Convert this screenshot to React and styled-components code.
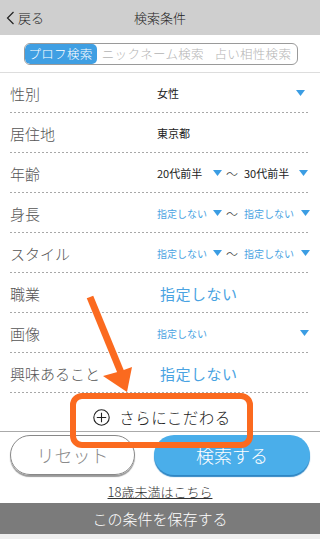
import React from 'react'
import styled, { createGlobalStyle } from 'styled-components'

const GlobalStyle = createGlobalStyle`
  html, body {
    margin: 0;
    padding: 0;
    background: #ffffff;
  }
  body {
    font-family: "Noto Sans CJK JP", "Noto Sans", sans-serif;
  }
`

const rows = [
  { label: '性別', kind: 'single', value: '女性' },
  { label: '居住地', kind: 'plain', value: '東京都' },
  { label: '年齢', kind: 'range', from: '20代前半', to: '30代前半' },
  { label: '身長', kind: 'rangeSmall', from: '指定しない', to: '指定しない' },
  { label: 'スタイル', kind: 'rangeSmall', from: '指定しない', to: '指定しない' },
  { label: '職業', kind: 'link', value: '指定しない' },
  { label: '画像', kind: 'singleSmall', value: '指定しない' },
  { label: '興味あること', kind: 'link', value: '指定しない' },
]

function Arrow() {
  return (
    <svg width="9" height="6" viewBox="0 0 9 6">
      <path d="M0 0 L9 0 L4.5 6 Z" fill="#3b9de3" />
    </svg>
  )
}

function RowValue({ row }) {
  if (row.kind === 'single') {
    return (
      <Select $width="148px">
        <ValueText>{row.value}</ValueText>
        <Arrow />
      </Select>
    )
  }
  if (row.kind === 'singleSmall') {
    return (
      <Select $width="152px">
        <SmallBlue>{row.value}</SmallBlue>
        <Arrow />
      </Select>
    )
  }
  if (row.kind === 'plain') {
    return <ValueText>{row.value}</ValueText>
  }
  if (row.kind === 'link') {
    return <LinkValue>{row.value}</LinkValue>
  }
  const Text = row.kind === 'range' ? ValueText : SmallBlue
  return (
    <Range>
      <Select $width="65px">
        <Text>{row.from}</Text>
        <Arrow />
      </Select>
      <Tilde>〜</Tilde>
      <Select $width={row.kind === 'range' ? '64px' : '66px'}>
        <Text>{row.to}</Text>
        <Arrow />
      </Select>
    </Range>
  )
}

export default function App() {
  return (
    <Screen>
      <GlobalStyle />
      <Header>
        <Back>
          <svg width="9" height="14" viewBox="0 0 9 14">
            <path d="M7.5 1 L1.5 7 L7.5 13" fill="none" stroke="#222" strokeWidth="1.2" />
          </svg>
          <span>戻る</span>
        </Back>
        <HeaderTitle>検索条件</HeaderTitle>
      </Header>
      <TabBar>
        <Segment>
          <Tab $active>プロフ検索</Tab>
          <Tab>ニックネーム検索</Tab>
          <Tab>占い相性検索</Tab>
        </Segment>
      </TabBar>
      <List>
        {rows.map((row) => (
          <Row key={row.label}>
            <Label>{row.label}</Label>
            <RowValue row={row} />
          </Row>
        ))}
      </List>
      <MoreRow>
        <PlusIcon>
          <svg width="17" height="17" viewBox="0 0 17 17">
            <circle cx="8.5" cy="8.5" r="7.7" fill="none" stroke="#222" strokeWidth="1.1" />
            <path d="M8.5 3.8 V13.2 M3.8 8.5 H13.2" stroke="#222" strokeWidth="1.1" />
          </svg>
        </PlusIcon>
        <MoreText>さらにこだわる</MoreText>
      </MoreRow>
      <Actions>
        <ResetButton>リセット</ResetButton>
        <SearchButton>検索する</SearchButton>
      </Actions>
      <Minor>18歳未満はこちら</Minor>
      <SaveBar>この条件を保存する</SaveBar>
      <Footer />

      <Highlight />
      <Pointer width="60" height="105" viewBox="0 0 60 105">
        <path d="M6 2 L38 80" stroke="#fb6a1f" strokeWidth="7" strokeLinecap="butt" />
        <path d="M43 97 L19 81 L37 76 L48 72 Z" fill="#fb6a1f" />
      </Pointer>
    </Screen>
  )
}

const Screen = styled.div`
  position: relative;
  width: 320px;
  height: 539px;
  overflow: hidden;
  display: flex;
  flex-direction: column;
  background: #ffffff;
`
// ヘッダー
const Header = styled.div`
  height: 35px;
  display: flex;
  align-items: center;
  justify-content: center;
  position: relative;
  background: #cfcfcf;
  flex-shrink: 0;
`

const Back = styled.div`
  position: absolute;
  left: 6px;
  top: 0;
  height: 35px;
  display: flex;
  align-items: center;
  gap: 3px;
  font-size: 13px;
  font-weight: 300;
  color: #222;
`

const HeaderTitle = styled.div`
  font-size: 13px;
  font-weight: 300;
  color: #222;
`
// タブ
const TabBar = styled.div`
  height: 38px;
  display: flex;
  align-items: center;
  justify-content: center;
  border-bottom: 1px solid #dddddd;
  flex-shrink: 0;
  box-sizing: border-box;
`

const Segment = styled.div`
  width: 274px;
  height: 22px;
  display: flex;
  margin-left: 1px;
  border: 1px solid #9a9a9a;
  border-radius: 6px;
  overflow: hidden;
  box-sizing: border-box;
`

const Tab = styled.div`
  display: flex;
  align-items: center;
  justify-content: center;
  padding: 0 ${(p) => (p.$active ? '4px' : '3px')};
  font-size: 12.5px;
  font-weight: 300;
  letter-spacing: 0.3px;
  white-space: nowrap;
  color: ${(p) => (p.$active ? '#ffffff' : '#b4b4b4')};
  background: ${(p) => (p.$active ? '#3f9fe3' : 'transparent')};
  border-radius: ${(p) => (p.$active ? '5px' : '0')};
  flex: ${(p) => (p.$active ? '0 0 72px' : '1 1 auto')};
  box-sizing: border-box;
`
// 条件リスト
const List = styled.div`
  display: flex;
  flex-direction: column;
`

const Row = styled.div`
  position: relative;
  height: 40px;
  display: flex;
  align-items: center;
  padding: 0 10px;
  box-sizing: border-box;

  &::after {
    content: '';
    position: absolute;
    left: 10px;
    right: 10px;
    bottom: 0;
    height: 1px;
    background-image: linear-gradient(to right, #a8a8a8 50%, transparent 50%);
    background-size: 4px 1px;
  }
`

const Label = styled.div`
  width: 147px;
  flex-shrink: 0;
  font-size: 15px;
  font-weight: 300;
  color: #555555;
`

const Select = styled.div`
  width: ${(p) => p.$width};
  display: flex;
  align-items: center;
  justify-content: space-between;
`

const Range = styled.div`
  display: flex;
  align-items: center;
`

const Tilde = styled.span`
  font-size: 12px;
  font-weight: 300;
  color: #333;
  margin: 0 6px 0 4px;
`

const ValueText = styled.span`
  font-size: 11px;
  color: #222;
`

const SmallBlue = styled.span`
  font-size: 10px;
  color: #4aa3e2;
`

const LinkValue = styled.span`
  font-size: 15px;
  color: #4aa3e2;
  margin-left: 3px;
  letter-spacing: 0.5px;
`
// さらにこだわる
const MoreRow = styled.div`
  height: 39px;
  display: flex;
  align-items: center;
  justify-content: center;
  padding-top: 10px;
  border-bottom: 1px solid #aaaaaa;
  box-sizing: border-box;
  flex-shrink: 0;
`

const PlusIcon = styled.span`
  display: flex;
  margin-right: 9px;
  margin-left: 4px;
`

const MoreText = styled.span`
  font-size: 15.5px;
  font-weight: 300;
  color: #222;
  letter-spacing: 0.5px;
`
// ボタン
const Actions = styled.div`
  display: flex;
  justify-content: space-between;
  padding: 3px 10px 0 10px;
`

const ResetButton = styled.div`
  width: 125px;
  height: 40px;
  display: flex;
  align-items: center;
  justify-content: center;
  border: 1px solid #888;
  border-radius: 20px;
  box-shadow: 0 2px 1px rgba(0, 0, 0, 0.4);
  font-size: 18px;
  font-weight: 300;
  color: #8a8a8a;
  box-sizing: border-box;
`

const SearchButton = styled.div`
  width: 156px;
  height: 40px;
  display: flex;
  align-items: center;
  justify-content: center;
  border-radius: 20px;
  background: #4aaeea;
  box-shadow: 0 2px 1px #2e86c4;
  font-size: 18px;
  font-weight: 300;
  color: #ffffff;
`

const Minor = styled.div`
  margin-top: 8px;
  text-align: center;
  font-size: 13px;
  font-weight: 300;
  color: #333;
  text-decoration: underline;
  line-height: 18px;
`

const SaveBar = styled.div`
  margin-top: 2px;
  height: 31px;
  display: flex;
  align-items: center;
  justify-content: center;
  background: #7b7b7b;
  font-size: 15px;
  font-weight: 300;
  color: #ffffff;
  flex-shrink: 0;
`

const Footer = styled.div`
  flex: 1;
  background: #efefef;
`
// 注釈
const Highlight = styled.div`
  position: absolute;
  left: 70px;
  top: 393px;
  width: 183px;
  height: 55px;
  border: 6px solid #fb6a1f;
  border-radius: 12px;
  box-sizing: border-box;
`

const Pointer = styled.svg`
  position: absolute;
  left: 84px;
  top: 295px;
`
